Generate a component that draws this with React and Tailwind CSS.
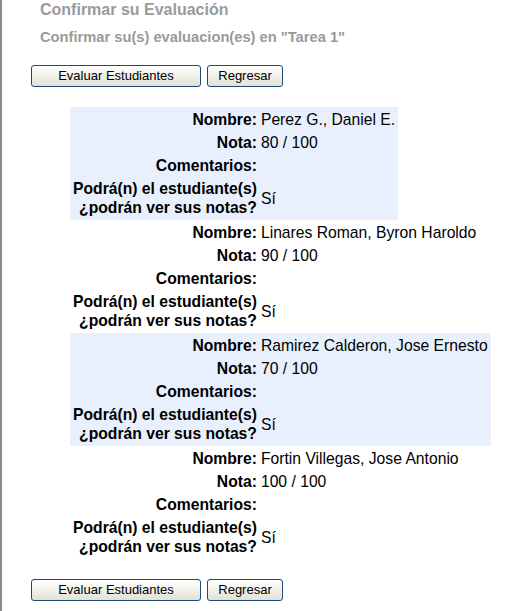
import React from "react";

const entries = [
  { nombre: "Perez G., Daniel E.", nota: "80 / 100", bg: true },
  { nombre: "Linares Roman, Byron Haroldo", nota: "90 / 100", bg: false },
  { nombre: "Ramirez Calderon, Jose Ernesto", nota: "70 / 100", bg: true },
  { nombre: "Fortin Villegas, Jose Antonio", nota: "100 / 100", bg: false },
];

function Buttons() {
  return (
    <div className="flex gap-[6px] ml-[29px]">
      <button className="w-[170px] h-[22px] border border-[#1c4a7a] rounded-[3px] bg-gradient-to-b from-white to-[#e4e1d4] text-[13px] leading-[20px] text-black">
        Evaluar Estudiantes
      </button>
      <button className="w-[76px] h-[22px] border border-[#1c4a7a] rounded-[3px] bg-gradient-to-b from-white to-[#e4e1d4] text-[13px] leading-[20px] text-black">
        Regresar
      </button>
    </div>
  );
}

function Entry({ e }) {
  const lab = "text-right font-bold px-[1px] py-[1px] align-middle whitespace-nowrap";
  const val = "text-left px-[1px] py-[1px] align-middle whitespace-nowrap";
  return (
    <table
      className={`ml-[68px] border-separate border-spacing-[2px] text-[15.7px] leading-[19px] text-black ${
        e.bg ? "bg-[#e8f0fd]" : "bg-white"
      }`}
    >
      <tbody>
        <tr>
          <td className={lab}>Nombre:</td>
          <td className={val}>{e.nombre}</td>
        </tr>
        <tr>
          <td className={lab}>Nota:</td>
          <td className={val}>{e.nota}</td>
        </tr>
        <tr>
          <td className={lab}>Comentarios:</td>
          <td className={val}></td>
        </tr>
        <tr>
          <td className={lab}>
            Podrá(n) el estudiante(s)
            <br />
            ¿podrán ver sus notas?
          </td>
          <td className={val}>Sí</td>
        </tr>
      </tbody>
    </table>
  );
}

export default function App() {
  return (
    <div
      className="w-[521px] h-[611px] bg-white border-l-2 border-[#8c8c8c] overflow-hidden"
      style={{ fontFamily: '"Liberation Sans", Arial, sans-serif' }}
    >
      <h1 className="ml-[38px] mt-[1px] text-[16px] leading-[18px] font-bold text-[#9a9a9a]">
        Confirmar su Evaluación
      </h1>
      <h2 className="ml-[38px] mt-[10px] text-[14.7px] leading-[17px] font-bold text-[#9a9a9a]">
        Confirmar su(s) evaluacion(es) en "Tarea 1"
      </h2>
      <div className="mt-[19px]">
        <Buttons />
      </div>
      <div className="mt-[20px] flex flex-col items-start">
        {entries.map((e, i) => (
          <Entry key={i} e={e} />
        ))}
      </div>
      <div className="mt-[20px]">
        <Buttons />
      </div>
    </div>
  );
}
